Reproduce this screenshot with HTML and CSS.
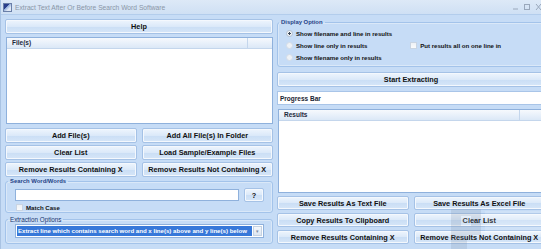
FILE: index.html
```html
<!DOCTYPE html>
<html lang="en">
<head>
<meta charset="UTF-8">
<title>Extract Text After Or Before Search Word Software</title>
<link rel="stylesheet" href="styles.css">
</head>
<body>

<div class="window">
    <div class="titlebar">
        <span class="app-icon"></span>
        <span class="title">Extract Text After Or Before Search Word Software</span>
        <svg class="controls" width="30" height="8" viewBox="0 0 30 8">
            <path d="M2 6h5" stroke="#9aa8bb" stroke-width="1"/>
            <rect x="13.5" y="1.5" width="5" height="5" fill="none" stroke="#9aa8bb"/>
            <path d="M25 1l5 6M30 1l-5 6" stroke="#9aa8bb" stroke-width="1"/>
        </svg>
    </div>

    <div class="main">
        <div class="left">
            <button class="btn">Help</button>
            <div class="listbox files">
                <div class="list-head"><span>File(s)</span><span class="col-end"></span></div>
            </div>
            <div class="btn-grid">
                <button class="btn">Add File(s)</button>
                <button class="btn">Add All File(s) In Folder</button>
                <button class="btn">Clear List</button>
                <button class="btn">Load Sample/Example Files</button>
                <button class="btn">Remove Results Containing X</button>
                <button class="btn">Remove Results Not Containing X</button>
            </div>
            <fieldset class="group search">
                <legend>Search Word/Words</legend>
                <div class="search-row">
                    <input type="text" class="textbox">
                    <button class="btn small">?</button>
                </div>
                <label class="check"><span class="box"></span>Match Case</label>
            </fieldset>
            <fieldset class="group extract">
                <legend>Extraction Options</legend>
                <div class="combo">
                    <span class="combo-text">Extract line which contains search word and x line(s) above and y line(s) below</span>
                    <span class="combo-arrow">&#9662;</span>
                </div>
            </fieldset>
        </div>

        <div class="right">
            <fieldset class="group display">
                <legend>Display Option</legend>
                <div class="options">
                    <div class="radios">
                        <label class="radio"><span class="dot on"></span>Show filename and line in results</label>
                        <label class="radio"><span class="dot"></span>Show line only in results</label>
                        <label class="radio"><span class="dot"></span>Show filename only in results</label>
                    </div>
                    <label class="check"><span class="box"></span>Put results all on one line in</label>
                </div>
            </fieldset>
            <button class="btn">Start Extracting</button>
            <div class="progress">Progress Bar</div>
            <div class="listbox results">
                <div class="list-head"><span>Results</span><span class="col-end"></span></div>
            </div>
            <div class="btn-grid">
                <button class="btn">Save Results As Text File</button>
                <button class="btn">Save Results As Excel File</button>
                <button class="btn">Copy Results To Clipboard</button>
                <button class="btn">Clear List</button>
                <button class="btn">Remove Results Containing X</button>
                <button class="btn">Remove Results Not Containing X</button>
            </div>
            <svg class="watermark" width="100" height="50" viewBox="0 0 100 50">
                <path d="M4 4h30v26h-14v18h-16z" fill="#7f8ea3"/>
                <rect x="14" y="11" width="10" height="10" fill="#dfe8f3"/>
                <rect x="38" y="6" width="56" height="22" fill="#ffffff" opacity="0.7"/>
            </svg>
        </div>
    </div>
</div>

</body>
</html>
```

FILE: styles.css
```css
body {
    margin: 0;
    padding: 0;
    font-family: "Liberation Sans", Arial, sans-serif;
    background: #c4daf4;
}
.window {
    width: 541px;
    height: 249px;
    overflow: hidden;
    background: #c6dcf6;
    border-left: 1px solid #a9c3e3;
    box-sizing: border-box;
}
.titlebar {
    height: 15px;
    display: flex;
    align-items: center;
    padding-left: 2px;
    background: linear-gradient(#dde9f7, #cfe0f4);
    border-bottom: 1px solid #b3cdec;
    box-sizing: border-box;
}
.app-icon {
    width: 9px;
    height: 9px;
    margin-right: 3px;
    background: linear-gradient(135deg, #2a3f8c 40%, #8aa8d8 40%, #dfe8f5 70%);
    border: 1px solid #6a7fa8;
    box-sizing: border-box;
}
.title {
    font-size: 6.7px;
    color: #8a96a6;
    flex: 1;
}
.controls {
    margin-right: 0;
}
.main {
    display: flex;
    gap: 4px;
    padding: 4px 0 0 4px;
}
.left {
    width: 268px;
    flex-shrink: 0;
    display: flex;
    flex-direction: column;
}
.right {
    width: 268px;
    flex-shrink: 0;
    display: flex;
    flex-direction: column;
    position: relative;
}
.btn {
    display: block;
    width: 100%;
    height: 15px;
    padding: 0;
    font-family: "Liberation Sans", Arial, sans-serif;
    font-weight: bold;
    font-size: 7.3px;
    color: #111;
    border: 1px solid #a5c2e6;
    border-radius: 2px;
    background: linear-gradient(#eef5fd, #dbe9f9 50%, #cadef5 51%, #d6e6f8);
    box-shadow: inset 0 0 0 1px #f4f8fd;
    white-space: nowrap;
    overflow: hidden;
}
.listbox {
    background: #fff;
    border: 1px solid #8fb1dc;
    box-sizing: border-box;
}
.list-head {
    height: 10px;
    display: flex;
    font-size: 6.5px;
    font-weight: bold;
    color: #1d2a3c;
    background: linear-gradient(#f6f9fd, #dbe8f7);
    border-bottom: 1px solid #c4d6ec;
}
.list-head span:first-child {
    flex: 1;
    padding: 1px 0 0 5px;
    border-right: 1px solid #c4d6ec;
}
.col-end {
    width: 24px;
}
.files {
    height: 87px;
    margin-top: 3px;
    margin-left: 1px;
}
.btn-grid {
    display: grid;
    grid-template-columns: 1fr 1fr;
    gap: 2px 5px;
    margin-top: 4px;
}
.group {
    margin: 0;
    padding: 0 8px 3px 9px;
    border: 1px solid #a3c3ea;
    border-radius: 3px;
    box-shadow: inset 0 0 0 1px #dae8f8;
}
.group legend {
    padding: 0 2px;
    margin-left: -7px;
    font-size: 5.9px;
    font-weight: bold;
    color: #1e3f86;
    line-height: 7px;
}
.search {
    margin-top: 1px;
    height: 35px;
    box-sizing: border-box;
}
.search-row {
    display: flex;
    gap: 5px;
    align-items: center;
    margin-top: 3px;
}
.textbox {
    flex: 1;
    min-width: 0;
    height: 12px;
    padding: 0;
    border: 1px solid #8fb1dc;
    box-sizing: border-box;
    background: #fff;
}
.btn.small {
    width: 20px;
    height: 14px;
    flex-shrink: 0;
}
.check,
.radio {
    display: flex;
    align-items: center;
    font-size: 6.1px;
    font-weight: bold;
    color: #111;
    white-space: nowrap;
}
.box {
    width: 7px;
    height: 7px;
    margin-right: 3px;
    border: 1px solid #c9d4e2;
    background: linear-gradient(#eef1f5, #fafbfc);
    box-sizing: border-box;
}
.search .check {
    margin-top: 2px;
    margin-left: 1px;
}
.extract {
    margin-top: 3px;
    height: 28px;
    box-sizing: border-box;
}
.extract legend {
    font-weight: normal;
    font-size: 6.3px;
    color: #183670;
}
.combo {
    display: flex;
    height: 14px;
    margin-top: 1px;
    border: 1px solid #8fb1dc;
    background: #fff;
    box-sizing: border-box;
    padding: 1px;
}
.combo-text {
    flex: 1;
    min-width: 0;
    background: #3778d9;
    color: #fff;
    font-size: 6.1px;
    font-weight: bold;
    line-height: 10px;
    padding-left: 1px;
    white-space: nowrap;
    overflow: hidden;
}
.combo-arrow {
    width: 9px;
    margin-left: 1px;
    font-size: 5px;
    line-height: 9px;
    text-align: center;
    color: #7b8ca3;
    background: linear-gradient(#f4f7fb, #dde6f1);
    border: 1px solid #c5d2e2;
    box-sizing: border-box;
}
.display {
    height: 48px;
    box-sizing: border-box;
    padding-left: 8px;
}
.options {
    display: flex;
    gap: 18px;
    padding-top: 4px;
}
.radios {
    display: flex;
    flex-direction: column;
    gap: 5px;
}
.dot {
    width: 7px;
    height: 7px;
    margin-right: 3px;
    border-radius: 50%;
    border: 1px solid #d3dce7;
    background: #eef2f6;
    box-sizing: border-box;
}
.dot.on {
    border-color: #b5c2d2;
    background: radial-gradient(circle, #3a4656 30%, #eef2f6 40%);
}
.right > .btn {
    margin-top: 5px;
}
.progress {
    margin-top: 4px;
    height: 14px;
    line-height: 13px;
    background: #fff;
    border: 1px solid #a9c5e8;
    box-sizing: border-box;
    padding-left: 2px;
    font-size: 6.5px;
    font-weight: bold;
    color: #1a2433;
}
.results {
    margin-top: 4px;
    height: 84px;
    margin-left: 1px;
}
.right .btn-grid {
    margin-top: 3px;
    gap: 3px 5px;
}
.right .btn-grid .btn {
    height: 14px;
}
.watermark {
    position: absolute;
    left: 170px;
    top: 186px;
    opacity: 0.2;
    pointer-events: none;
}
```
